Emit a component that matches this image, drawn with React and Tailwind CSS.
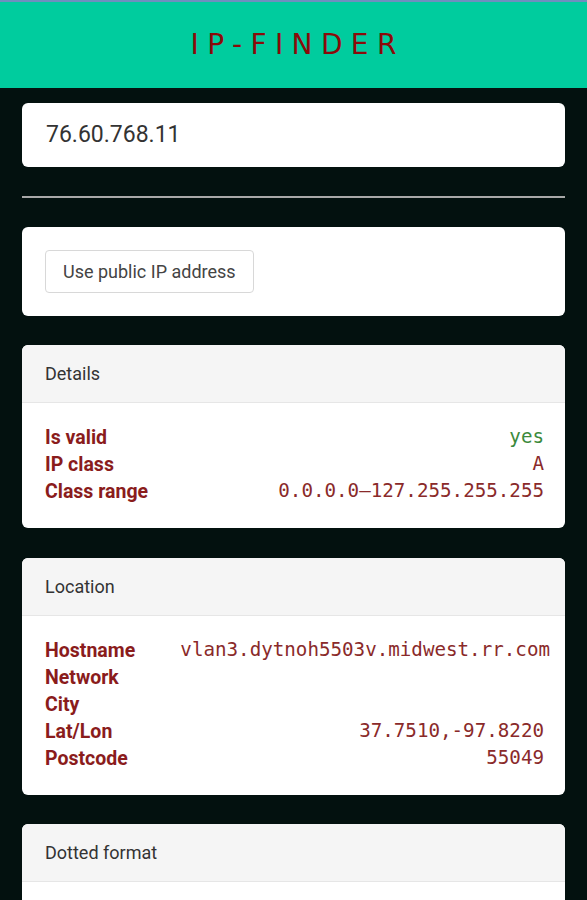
import React from "react";

const mono = { fontFamily: "'DejaVu Sans Mono', monospace" };

const Row = ({ label, value, green }) => (
  <div className="flex items-center justify-between h-[27px]">
    <span className="font-bold text-[19.5px] text-[#8a1c1c]">{label}</span>
    <span
      className={`text-[19.2px] whitespace-nowrap ${green ? "text-[#3c8a3c]" : "text-[#8a2a2a]"}`}
      style={mono}
    >
      {value}
    </span>
  </div>
);

const Card = ({ title, children }) => (
  <div className="bg-white rounded-[6px] overflow-hidden">
    <div className="h-[58px] bg-[#f5f5f5] border-b border-[#e6e6e6] flex items-center px-[23px] text-[18px] text-[#333]">
      {title}
    </div>
    <div className="pl-[23px] pr-[21px] pt-[21px] pb-[23px]">{children}</div>
  </div>
);

export default function App() {
  return (
    <div className="min-h-[900px] bg-[#03110f] font-['Roboto',sans-serif]">
      <div className="h-[2px] bg-[#6f8fbf]" />
      <div className="h-[86px] bg-[#00cc9e] flex items-center justify-center">
        <h1 className="text-[28px] tracking-[0.3em] text-[#8b0a0a] pl-[0.3em]" style={{ fontFamily: "'DejaVu Sans', sans-serif" }}>
          IP-FINDER
        </h1>
      </div>
      <div className="px-[22px] pt-[15px] flex flex-col">
        <div className="bg-white rounded-[6px] h-[64px] flex items-center px-[24px] text-[23px] text-[#333]">
          76.60.768.11
        </div>
        <div className="h-[2px] bg-[#a8a8a8] mt-[29px]" />
        <div className="bg-white rounded-[6px] h-[89px] mt-[29px] flex items-center px-[23px]">
          <button className="h-[43px] px-[17px] border border-[#d8d8d8] rounded-[4px] text-[18px] text-[#444] bg-white">
            Use public IP address
          </button>
        </div>
        <div className="mt-[29px]">
          <Card title="Details">
            <Row label="Is valid" value="yes" green />
            <Row label="IP class" value="A" />
            <Row label="Class range" value="0.0.0.0–127.255.255.255" />
          </Card>
        </div>
        <div className="mt-[30px]">
          <Card title="Location">
            <div className="flex items-center justify-between h-[27px]">
              <span className="font-bold text-[19.5px] text-[#8a1c1c]">Hostname</span>
              <span className="text-[19.2px] text-[#8a2a2a] whitespace-nowrap -mr-[6px]" style={mono}>
                vlan3.dytnoh5503v.midwest.rr.com
              </span>
            </div>
            <Row label="Network" value="" />
            <Row label="City" value="" />
            <Row label="Lat/Lon" value="37.7510,-97.8220" />
            <Row label="Postcode" value="55049" />
          </Card>
        </div>
        <div className="mt-[29px]">
          <Card title="Dotted format">
            <div className="h-[60px]" />
          </Card>
        </div>
      </div>
    </div>
  );
}
